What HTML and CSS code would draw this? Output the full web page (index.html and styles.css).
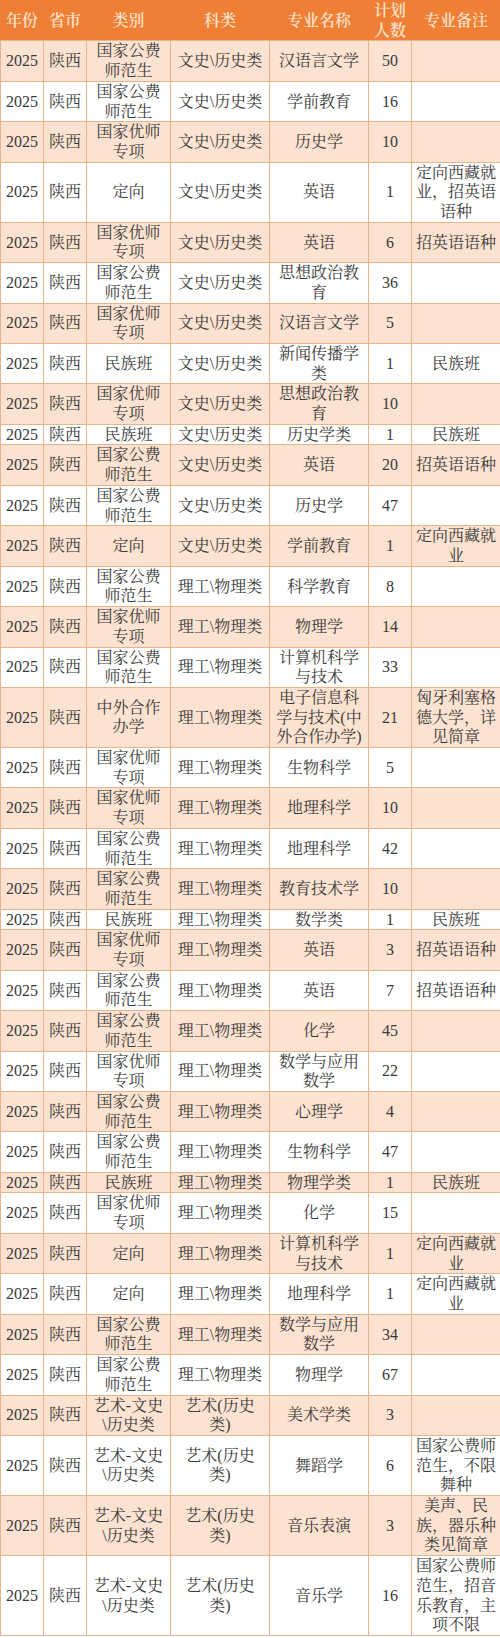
FILE: index.html
```html
<!DOCTYPE html>
<html lang="zh-CN">
<head>
<meta charset="utf-8">
<title>招生计划</title>
<link rel="stylesheet" href="styles.css">
</head>
<body>
<table class="plan">
<colgroup>
<col class="c-year"><col class="c-prov"><col class="c-type"><col class="c-subj"><col class="c-major"><col class="c-num"><col class="c-note">
</colgroup>
<thead>
<tr><th>年份</th><th>省市</th><th>类别</th><th>科类</th><th>专业名称</th><th class="narrow">计划人数</th><th>专业备注</th></tr>
</thead>
<tbody>
<tr><td>2025</td><td>陕西</td><td>国家公费师范生</td><td>文史\历史类</td><td>汉语言文学</td><td>50</td><td></td></tr>
<tr><td>2025</td><td>陕西</td><td>国家公费师范生</td><td>文史\历史类</td><td>学前教育</td><td>16</td><td></td></tr>
<tr><td>2025</td><td>陕西</td><td>国家优师专项</td><td>文史\历史类</td><td>历史学</td><td>10</td><td></td></tr>
<tr><td>2025</td><td>陕西</td><td>定向</td><td>文史\历史类</td><td>英语</td><td>1</td><td>定向西藏就业，招英语语种</td></tr>
<tr><td>2025</td><td>陕西</td><td>国家优师专项</td><td>文史\历史类</td><td>英语</td><td>6</td><td>招英语语种</td></tr>
<tr><td>2025</td><td>陕西</td><td>国家公费师范生</td><td>文史\历史类</td><td>思想政治教育</td><td>36</td><td></td></tr>
<tr><td>2025</td><td>陕西</td><td>国家优师专项</td><td>文史\历史类</td><td>汉语言文学</td><td>5</td><td></td></tr>
<tr><td>2025</td><td>陕西</td><td>民族班</td><td>文史\历史类</td><td>新闻传播学类</td><td>1</td><td>民族班</td></tr>
<tr><td>2025</td><td>陕西</td><td>国家优师专项</td><td>文史\历史类</td><td>思想政治教育</td><td>10</td><td></td></tr>
<tr><td>2025</td><td>陕西</td><td>民族班</td><td>文史\历史类</td><td>历史学类</td><td>1</td><td>民族班</td></tr>
<tr><td>2025</td><td>陕西</td><td>国家公费师范生</td><td>文史\历史类</td><td>英语</td><td>20</td><td>招英语语种</td></tr>
<tr><td>2025</td><td>陕西</td><td>国家公费师范生</td><td>文史\历史类</td><td>历史学</td><td>47</td><td></td></tr>
<tr><td>2025</td><td>陕西</td><td>定向</td><td>文史\历史类</td><td>学前教育</td><td>1</td><td>定向西藏就业</td></tr>
<tr><td>2025</td><td>陕西</td><td>国家公费师范生</td><td>理工\物理类</td><td>科学教育</td><td>8</td><td></td></tr>
<tr><td>2025</td><td>陕西</td><td>国家优师专项</td><td>理工\物理类</td><td>物理学</td><td>14</td><td></td></tr>
<tr><td>2025</td><td>陕西</td><td>国家公费师范生</td><td>理工\物理类</td><td>计算机科学与技术</td><td>33</td><td></td></tr>
<tr><td>2025</td><td>陕西</td><td>中外合作办学</td><td>理工\物理类</td><td>电子信息科学与技术(中外合作办学)</td><td>21</td><td>匈牙利塞格德大学，详见简章</td></tr>
<tr><td>2025</td><td>陕西</td><td>国家优师专项</td><td>理工\物理类</td><td>生物科学</td><td>5</td><td></td></tr>
<tr><td>2025</td><td>陕西</td><td>国家优师专项</td><td>理工\物理类</td><td>地理科学</td><td>10</td><td></td></tr>
<tr><td>2025</td><td>陕西</td><td>国家公费师范生</td><td>理工\物理类</td><td>地理科学</td><td>42</td><td></td></tr>
<tr><td>2025</td><td>陕西</td><td>国家公费师范生</td><td>理工\物理类</td><td>教育技术学</td><td>10</td><td></td></tr>
<tr><td>2025</td><td>陕西</td><td>民族班</td><td>理工\物理类</td><td>数学类</td><td>1</td><td>民族班</td></tr>
<tr><td>2025</td><td>陕西</td><td>国家优师专项</td><td>理工\物理类</td><td>英语</td><td>3</td><td>招英语语种</td></tr>
<tr><td>2025</td><td>陕西</td><td>国家公费师范生</td><td>理工\物理类</td><td>英语</td><td>7</td><td>招英语语种</td></tr>
<tr><td>2025</td><td>陕西</td><td>国家公费师范生</td><td>理工\物理类</td><td>化学</td><td>45</td><td></td></tr>
<tr><td>2025</td><td>陕西</td><td>国家优师专项</td><td>理工\物理类</td><td>数学与应用数学</td><td>22</td><td></td></tr>
<tr><td>2025</td><td>陕西</td><td>国家公费师范生</td><td>理工\物理类</td><td>心理学</td><td>4</td><td></td></tr>
<tr><td>2025</td><td>陕西</td><td>国家公费师范生</td><td>理工\物理类</td><td>生物科学</td><td>47</td><td></td></tr>
<tr><td>2025</td><td>陕西</td><td>民族班</td><td>理工\物理类</td><td>物理学类</td><td>1</td><td>民族班</td></tr>
<tr><td>2025</td><td>陕西</td><td>国家优师专项</td><td>理工\物理类</td><td>化学</td><td>15</td><td></td></tr>
<tr><td>2025</td><td>陕西</td><td>定向</td><td>理工\物理类</td><td>计算机科学与技术</td><td>1</td><td>定向西藏就业</td></tr>
<tr><td>2025</td><td>陕西</td><td>定向</td><td>理工\物理类</td><td>地理科学</td><td>1</td><td>定向西藏就业</td></tr>
<tr><td>2025</td><td>陕西</td><td>国家公费师范生</td><td>理工\物理类</td><td>数学与应用数学</td><td>34</td><td></td></tr>
<tr><td>2025</td><td>陕西</td><td>国家公费师范生</td><td>理工\物理类</td><td>物理学</td><td>67</td><td></td></tr>
<tr><td>2025</td><td>陕西</td><td>艺术-文史\历史类</td><td>艺术(历史类)</td><td>美术学类</td><td>3</td><td></td></tr>
<tr><td>2025</td><td>陕西</td><td>艺术-文史\历史类</td><td>艺术(历史类)</td><td>舞蹈学</td><td>6</td><td>国家公费师范生，不限舞种</td></tr>
<tr><td>2025</td><td>陕西</td><td>艺术-文史\历史类</td><td>艺术(历史类)</td><td>音乐表演</td><td>3</td><td>美声、民族，器乐种类见简章</td></tr>
<tr><td>2025</td><td>陕西</td><td>艺术-文史\历史类</td><td>艺术(历史类)</td><td>音乐学</td><td>16</td><td>国家公费师范生，招音乐教育，主项不限</td></tr>
</tbody>
</table>
</body>
</html>
```

FILE: styles.css
```css
html, body {
  margin: 0;
  padding: 0;
  background: #ffffff;
}

.plan {
  width: 500px;
  table-layout: fixed;
  border-collapse: collapse;
  font-family: "Liberation Serif", "Noto Serif CJK SC", "Noto Sans CJK SC", serif;
  font-size: 16px;
  line-height: 19.7px;
  color: #3a3a3a;
  border: 1px solid #eab38a;
}

.c-year { width: 43px; }
.c-prov { width: 43px; }
.c-type { width: 84px; }
.c-subj { width: 99px; }
.c-major { width: 99px; }
.c-num { width: 43px; }
.c-note { width: 89px; }

.plan th,
.plan td {
  padding: 0 4px;
  text-align: center;
  vertical-align: middle;
  border: 1px solid #eab38a;
}

.plan th {
  background: #ee7f34;
  color: #fde2cc;
  font-weight: 600;
  height: 39px;
  border-color: #ee7f34;
  border-bottom-color: #eab38a;
}

.plan th.narrow {
  padding: 0 2px;
}

.plan td:nth-child(3) {
  padding: 0 5px;
}

.plan td:nth-child(4),
.plan td:nth-child(5) {
  padding: 0 5px;
}

.plan td:nth-child(7) {
  padding: 0 3px;
}

.plan td:nth-child(1),
.plan td:nth-child(2),
.plan td:nth-child(6) {
  padding: 0 1px;
}

.plan tbody tr:nth-child(odd) td {
  background: #fce2d0;
}

.plan tbody tr:nth-child(even) td {
  background: #ffffff;
}
```
